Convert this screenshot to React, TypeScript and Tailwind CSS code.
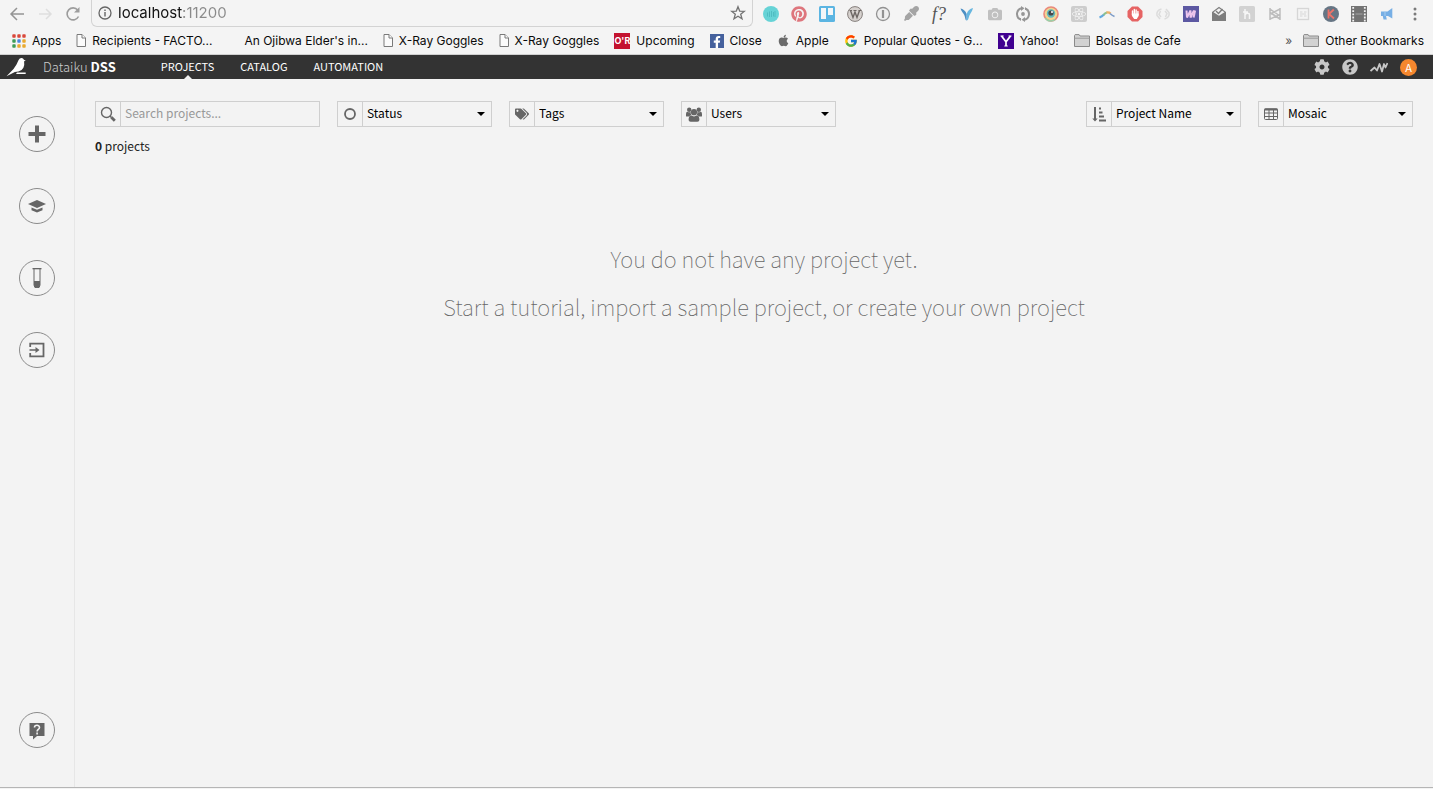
import type { ReactNode } from "react";
import {
  FaApple,
  FaCamera,
  FaCog,
  FaEyeDropper,
  FaFacebookF,
  FaPinterest,
  FaQuestionCircle,
  FaReact,
  FaTags,
} from "react-icons/fa";
import { FcGoogle } from "react-icons/fc";

const sans = "font-['Noto_Sans_CJK_SC','Source_Sans_Pro',sans-serif]";

/* ---------- browser toolbar ---------- */

function PageIcon() {
  return (
    <svg viewBox="0 0 10 13" className="h-[13px] w-[10px]" fill="#fbfbfb" stroke="#7a7a7a">
      <path d="M1 .5h5l3.500 3.500v8.500H1z" />
      <path d="M6 .5V4h3.500" />
    </svg>
  );
}

function FolderIcon() {
  return (
    <svg viewBox="0 0 16 13" className="h-[13px] w-4" fill="#d2d2d2" stroke="#8a8a8a">
      <path d="M.5 12.500v-11l.6-.9h4l1 1.400h9.400v10.500z" />
      <path d="M.5 4.200h15" stroke="#9c9c9c" />
    </svg>
  );
}

function AppsIcon() {
  const colors = ["#d9483b", "#d9483b", "#d9483b", "#3f9d58", "#4b87e0", "#e9a92f", "#3f9d58", "#e9a92f", "#e9a92f"];
  return (
    <svg viewBox="0 0 14 14" className="size-[14px]">
      {colors.map((c, i) => (
        <rect key={i} x={(i % 3) * 5 + 0.3} y={Math.floor(i / 3) * 5 + 0.3} width="3.400" height="3.400" rx=".8" fill={c} />
      ))}
    </svg>
  );
}

function OreillyIcon() {
  return (
    <span className="flex size-4 items-center justify-center bg-[#c4122f] text-[9px] leading-4 font-bold text-white">
      O'R
    </span>
  );
}

function FacebookIcon() {
  return (
    <span className="flex size-[14px] items-end justify-center bg-[#45619d] text-white">
      <FaFacebookF className="size-3" />
    </span>
  );
}

function YahooIcon() {
  return (
    <svg viewBox="0 0 16 16" className="size-4">
      <rect width="16" height="16" fill="#400090" />
      <path d="M3.500 3 8 8.800 12.500 3M8 8.500V13" fill="none" stroke="#fff" strokeWidth="1.700" />
      <path d="M2.500 3h3.200M10.500 3h3M6.300 13h3.400" fill="none" stroke="#fff" />
    </svg>
  );
}

const bookmarks: { label: string; icon: ReactNode }[] = [
  { label: "Apps", icon: <AppsIcon /> },
  { label: "Recipients - FACTO...", icon: <PageIcon /> },
  { label: "An Ojibwa Elder's in...", icon: <span className="w-[11px]" /> },
  { label: "X-Ray Goggles", icon: <PageIcon /> },
  { label: "X-Ray Goggles", icon: <PageIcon /> },
  { label: "Upcoming", icon: <OreillyIcon /> },
  { label: "Close", icon: <FacebookIcon /> },
  { label: "Apple", icon: <FaApple className="size-[13px] text-[#6b6b6b]" /> },
  { label: "Popular Quotes - G...", icon: <FcGoogle className="size-[14px]" /> },
  { label: "Yahoo!", icon: <YahooIcon /> },
  { label: "Bolsas de Cafe", icon: <FolderIcon /> },
];

function Svg({ children }: { children: ReactNode }) {
  return (
    <svg viewBox="0 0 16 16" className="size-4" fill="none">
      {children}
    </svg>
  );
}

const extensions: { name: string; icon: ReactNode }[] = [
  {
    name: "Sound",
    icon: (
      <Svg>
        <circle cx="8" cy="8" r="8" fill="#66d3d6" />
        <path d="M4.500 6.500v4M6.500 5.500v5.500M8.500 5v6M10.500 6v4.500M12 5v6" stroke="#4fbdc2" />
      </Svg>
    ),
  },
  { name: "Pinterest", icon: <FaPinterest className="size-4 text-[#de767d]" /> },
  {
    name: "Trello",
    icon: (
      <Svg>
        <rect width="16" height="16" rx="1.500" fill="#5bb5e2" />
        <rect x="2" y="2" width="5" height="11" fill="#f3f6f8" />
        <rect x="9" y="2" width="5" height="7" fill="#f3f6f8" />
      </Svg>
    ),
  },
  {
    name: "Wikipedia",
    icon: (
      <Svg>
        <circle cx="8" cy="8" r="7.400" fill="#d6d1ce" stroke="#857f7c" />
        <path d="m3.500 4.500 2.500 7 2-5.500 2 5.500 2.500-7" stroke="#6d6764" strokeWidth="1.400" />
        <path d="M2.500 4.500h2.500M6.500 4.500h3M11.500 4.500h2.500" stroke="#6d6764" />
      </Svg>
    ),
  },
  {
    name: "Password",
    icon: (
      <Svg>
        <circle cx="8" cy="8" r="6.500" fill="#efefef" stroke="#929292" strokeWidth="1.300" />
        <path d="M8 4v8" stroke="#929292" strokeWidth="2.200" />
      </Svg>
    ),
  },
  { name: "Eye dropper", icon: <FaEyeDropper className="size-[15px] text-[#a4a4a4]" /> },
  {
    name: "Fonts",
    icon: (
      <span className="font-['Liberation_Serif',serif] text-lg leading-4 text-[#555] italic">
        f?
      </span>
    ),
  },
  {
    name: "Vysor",
    icon: (
      <Svg>
        <path d="M1.500 2.500c2.500.5 5 2 6.200 5.500V14.500C6 14.500 6.500 11 5 8.500 4 6.500 2.500 5.500 1.500 2.500z" fill="#4c8fc4" />
        <path d="M14 2C11 2.500 8.500 4.500 7.700 8v6.500c2.200-.5 1.800-3.500 3-5.500 1-2 2.500-3.500 3.300-7z" fill="#67b6df" />
      </Svg>
    ),
  },
  { name: "Screenshot", icon: <FaCamera className="size-[14px] text-[#c0c0c0]" /> },
  {
    name: "Refresh",
    icon: (
      <Svg>
        <path d="M5 13.200A6 6 0 0 1 6.500 2.200M11 2.800A6 6 0 0 1 9.500 13.800" stroke="#969696" strokeWidth="2" />
        <path d="m6 0 3.500 2.300L6 5zM10 16l-3.500-2.300L10 11zM2 12h4v3zM14 4h-4V1z" fill="#969696" />
        <circle cx="8" cy="8" r="1.900" fill="#969696" />
      </Svg>
    ),
  },
  {
    name: "Eye",
    icon: (
      <Svg>
        <circle cx="8" cy="8" r="7" fill="#f2d491" stroke="#e9887b" strokeWidth="1.600" />
        <path d="M2.200 12A7 7 0 0 0 12 13.700" stroke="#9ad0a8" strokeWidth="1.600" />
        <circle cx="8" cy="7.500" r="4.200" fill="#62b8bd" />
        <circle cx="8" cy="7" r="2.600" fill="#484848" />
        <circle cx="9" cy="6" r="1" fill="#fff" />
      </Svg>
    ),
  },
  {
    name: "React",
    icon: (
      <span className="flex size-4 items-center justify-center rounded-xs bg-[#cdcdcd] text-[#f5f5f5]">
        <FaReact className="size-[14px]" />
      </span>
    ),
  },
  {
    name: "Arc",
    icon: (
      <Svg>
        <path d="M.5 11.500Q3 10.500 5 8.500" stroke="#62a8dd" strokeWidth="2" />
        <path d="M4.500 9Q6 7.200 8 6.500" stroke="#8cc08f" strokeWidth="2" />
        <path d="M7.500 6.500Q10 6 11.500 7.500" stroke="#edb065" strokeWidth="2.400" />
        <path d="M11 7.500Q13 9.500 15.500 10.500" stroke="#7d9cc8" strokeWidth="1.700" />
      </Svg>
    ),
  },
  {
    name: "Ad blocker",
    icon: (
      <Svg>
        <path d="M5 .5h6L15.500 5v6L11 15.500H5L.5 11V5z" fill="#e66363" />
        <path d="M5.500 9V5M7.300 8V3.500M9.100 8V4M10.900 9V5.500" stroke="#fff" strokeWidth="1.400" strokeLinecap="round" />
        <path d="M4.800 7.500h6.800v2.500L9.800 13H7.200L5 10z" fill="#fff" />
      </Svg>
    ),
  },
  {
    name: "Sync",
    icon: (
      <Svg>
        <path d="M6.500 3Q1 4.500 2 9.500l3 3.500M5.500 5 4 8.500 6 11M9.500 13q5.500-1.500 4.500-6.500l-3-3.500M10.500 11 12 7.500 10 5" stroke="#dcdcdc" strokeWidth="1.500" />
      </Svg>
    ),
  },
  {
    name: "Mail merge",
    icon: (
      <Svg>
        <rect width="16" height="16" fill="#5c58a2" />
        <path d="m3.500 4.500.5 7 3.500-7v7l3.500-7" stroke="#ecc5ec" strokeWidth="2" strokeLinejoin="bevel" />
        <path d="m10.500 11.500 1.500-7" stroke="#ecc5ec" strokeWidth="2.200" />
      </Svg>
    ),
  },
  {
    name: "Inbox",
    icon: (
      <Svg>
        <path d="M1 6 8 .8 15 6v9H1z" fill="#7d7d7d" />
        <path d="m2.500 6.300 5.500 3.500 5.500-3.500L8 2.200z" fill="#f1f1f1" />
        <path d="m5 5 2.500 2.500L11.500 3" stroke="#7d7d7d" strokeWidth="1.400" />
      </Svg>
    ),
  },
  {
    name: "Honey",
    icon: (
      <Svg>
        <rect width="16" height="16" rx="1.500" fill="#d2d2d2" />
        <path d="M6 3v10M6 9c1-2 4.500-2.500 4.500 0V13M4 6h5" stroke="#f6f6f6" strokeWidth="1.500" />
      </Svg>
    ),
  },
  {
    name: "Notation",
    icon: (
      <Svg>
        <path d="M3 2v12M13 2v12M3 3l10 7M3 6.500l10 6.500M13 3 3 8M13 8.500 3 13" stroke="#bdbdbd" strokeWidth="1.500" />
      </Svg>
    ),
  },
  {
    name: "Layout",
    icon: (
      <Svg>
        <rect x="2.500" y="2.500" width="11" height="11" stroke="#d6d6d6" strokeWidth="1.300" />
        <path d="M5 6h2.500M9 6h2.500M5 10h2.500M9 10h2.500M5 8h6" stroke="#d6d6d6" strokeWidth="1.200" />
      </Svg>
    ),
  },
  {
    name: "Keyboard",
    icon: (
      <Svg>
        <circle cx="8" cy="8" r="8" fill="#667584" />
        <path d="M5.500 3.500v9M10.800 3.500 6 8l5 4.500" stroke="#ec7268" strokeWidth="1.800" />
      </Svg>
    ),
  },
  {
    name: "Video",
    icon: (
      <Svg>
        <path d="M0 0h16v16H0z" fill="#737373" />
        <path d="M2.200 1v15M13.800 1v15" stroke="#f3f3f3" strokeWidth="1.800" strokeDasharray="1.800 1.400" />
        <path d="M4.500 8h7" stroke="#a5a5a5" />
      </Svg>
    ),
  },
  {
    name: "Announcements",
    icon: (
      <Svg>
        <path d="M13.300 2v10.500L9 10H7l.8 3.500H4.500L3.800 10H2V5.500h6.500z" fill="#77afe5" />
        <path d="M6 5.500V10" stroke="#a9cdef" />
      </Svg>
    ),
  },
  {
    name: "Browser menu",
    icon: (
      <Svg>
        <g fill="#7a7a7a">
          <circle cx="8" cy="3" r="1.500" />
          <circle cx="8" cy="8" r="1.500" />
          <circle cx="8" cy="13" r="1.500" />
        </g>
      </Svg>
    ),
  },
];

function BrowserBar() {
  return (
    <div className="border-b border-[#d0d0d0] bg-[#f4f4f4] font-['Inter',sans-serif]">
      <div className="flex h-[27px] items-stretch pr-[10px] pl-[9px]">
        <div className="flex items-center gap-3 pr-[10px]">
          <button aria-label="Back" className="size-4">
            <svg viewBox="0 0 16 16" fill="none" stroke="#949494" strokeWidth="1.500">
              <path d="M15 8H2M8 2 2 8l6 6" />
            </svg>
          </button>
          <button aria-label="Forward" className="size-4">
            <svg viewBox="0 0 16 16" fill="none" stroke="#dedede" strokeWidth="1.500">
              <path d="M2 8h12M9 3l5 5-5 5" />
            </svg>
          </button>
          <button aria-label="Reload" className="size-4">
            <svg viewBox="0 0 16 16" fill="none" stroke="#9c9c9c" strokeWidth="1.600">
              <path d="M13.500 10.500A6 6 0 1 1 12.700 4" />
              <path d="M14.500 1v5.500H9z" fill="#9c9c9c" stroke="none" />
            </svg>
          </button>
        </div>
        <div className="flex grow items-center rounded-b-md border border-t-0 border-[#d3d3d3] pr-[6px] pl-[6px]">
          <svg viewBox="0 0 14 14" className="mr-[6px] size-[14px] shrink-0" fill="none" stroke="#666">
            <circle cx="7" cy="7" r="6" strokeWidth="1.300" />
            <path d="M7 6v4.500M7 3.500V5" strokeWidth="1.400" />
          </svg>
          <input
            aria-label="Address"
            defaultValue="localhost:11200"
            className="min-w-0 grow bg-linear-to-r from-[#111] from-[65px] to-[#8a8a8a] to-[65px] bg-clip-text text-[15px] text-transparent outline-none"
          />
          <button aria-label="Bookmark this page" className="size-4">
            <svg viewBox="0 0 16 16" fill="none" stroke="#737373" strokeWidth="1.300">
              <path d="m8 1.700 1.700 4.400 4.700.2-3.700 2.900 1.300 4.600L8 11.200l-4 2.600 1.300-4.600L1.600 6.300l4.700-.2z" />
            </svg>
          </button>
        </div>
        <div className="flex items-center gap-3 pl-[10px]">
          {extensions.map((e) => (
            <button key={e.name} aria-label={e.name} className="flex size-4 items-center justify-center">
              {e.icon}
            </button>
          ))}
        </div>
      </div>
      <nav aria-label="Bookmarks" className="flex h-[27px] items-center gap-[15px] pr-[9px] pl-3 text-xs whitespace-nowrap text-[#0a0a0a]">
        {bookmarks.map((b, i) => (
          <a key={i} href="#" className="flex items-center gap-[6px]">
            {b.icon}
            {b.label}
          </a>
        ))}
        <button aria-label="More bookmarks" className="-mr-1 ml-auto text-[#555]">
          »
        </button>
        <a href="#" className="flex items-center gap-[6px]">
          <FolderIcon />
          Other Bookmarks
        </a>
      </nav>
    </div>
  );
}

/* ---------- application header ---------- */

function AppHeader() {
  return (
    <header className="flex h-6 items-center bg-[#333] pr-4 pl-[6px] text-[#eee]">
      <svg viewBox="0 0 21 20" className="h-5 w-[21px]" fill="#fff">
        <path d="M.5 19.300 7.500 12l3-4.500L12.600 3q1-2 3-1.900 1.700 0 2.300 1.600l1.900 1-1.700.6q.6 3.700-.7 6.400-1.300 2.800-5 3.800l-3.500.4z" />
        <path d="M11 15.500h8.700V17H10z" />
      </svg>
      <a href="#" className="ml-4 text-[13px] leading-6 font-light text-[#ccc]">
        Dataiku <strong className="font-bold text-white">DSS</strong>
      </a>
      <nav className="ml-[45px] flex h-6 gap-[26px] text-[11px] leading-[22px] text-white">
        <a href="#" aria-current="page" className="relative">
          PROJECTS
          <svg viewBox="0 0 8 4" className="absolute bottom-0 left-1/2 h-1 w-2 -translate-x-1/2" fill="#f3f3f3">
            <path d="M0 4 4 0l4 4z" />
          </svg>
        </a>
        <a href="#">CATALOG</a>
        <a href="#">AUTOMATION</a>
      </nav>
      <div className="ml-auto flex items-center gap-3 text-[#c8c8c8]">
        <button aria-label="Settings">
          <FaCog className="size-4" />
        </button>
        <button aria-label="Help">
          <FaQuestionCircle className="size-4" />
        </button>
        <button aria-label="Activity">
          <svg viewBox="0 0 18 16" className="h-4 w-[18px]" fill="none" stroke="currentColor" strokeWidth="1.800" strokeLinejoin="round">
            <path d="M.5 12 4.500 8.500l2.500 3L9.500 5l2.500 7.500L14 5l1.500 3.500L17.500 4" />
          </svg>
        </button>
        <button aria-label="Account" className="flex size-[17px] items-center justify-center rounded-full bg-[#f5872e] text-[11px] leading-4 text-white">
          A
        </button>
      </div>
    </header>
  );
}

/* ---------- sidebar ---------- */

function RoundButton({ label, children }: { label: string; children: ReactNode }) {
  return (
    <button aria-label={label} className="flex size-9 items-center justify-center rounded-full border border-[#8b8b8b] text-[#666]">
      <svg viewBox="0 0 20 20" className="size-5" fill="currentColor">
        {children}
      </svg>
    </button>
  );
}

function Sidebar() {
  return (
    <aside className="flex w-[75px] shrink-0 flex-col items-center gap-9 border-r border-[#e6e6e6] pt-[37px] pb-[39px]">
      <RoundButton label="New project">
        <path d="M8 1.500h4V8h6.500v4H12v6.500H8V12H1.500V8H8z" />
      </RoundButton>
      <RoundButton label="Tutorials">
        <path d="m10 4 9 4-9 4-9-4z" />
        <path d="m4.500 11.500 5.500 2.300 5.500-2.300v2.700l-5.500 2.300-5.500-2.300z" />
      </RoundButton>
      <RoundButton label="Samples">
        <path d="M5.500 0h9v1.300h-9z" />
        <path d="M7 1v16a3 3 0 0 0 6 0V1" fill="none" stroke="currentColor" />
        <path d="M7 13h6v4a3 3 0 0 1-6 0z" />
      </RoundButton>
      <RoundButton label="Import project">
        <path d="M3.200 7V3.700h13.300v12.600H3.200V13" fill="none" stroke="currentColor" strokeWidth="1.800" />
        <path d="M2.500 9.200h6V7l4 3-4 3v-2.200h-6z" />
      </RoundButton>
      <div className="mt-auto">
        <RoundButton label="Get help">
          <path d="M2.500 3h15v13H10l-4 3.500V16H2.500z" />
          <path d="M7.500 7.500C7.500 4.500 12.500 4.500 12.500 7.400c0 2-2.400 1.900-2.400 4M10.100 12.600v1.800" fill="none" stroke="#f3f3f3" strokeWidth="1.600" />
        </RoundButton>
      </div>
    </aside>
  );
}

/* ---------- project list ---------- */

function Field({ id, icon, children, wide }: { id: string; icon: ReactNode; children: ReactNode; wide?: boolean }) {
  return (
    <div className={`relative flex h-[26px] shrink-0 border border-[#cfcfcf] ${wide ? "w-[225px]" : "w-[155px]"}`}>
      <label htmlFor={id} className="flex w-[25px] shrink-0 items-center justify-center border-r border-[#cfcfcf] text-[#666]">
        {icon}
      </label>
      {children}
    </div>
  );
}

function SelectField({ id, label, icon }: { id: string; label: string; icon: ReactNode }) {
  return (
    <Field id={id} icon={icon}>
      <select id={id} aria-label={label} className="min-w-0 grow appearance-none bg-transparent pb-[2px] pl-1 text-xs text-black outline-none">
        <option>{label}</option>
      </select>
      <svg viewBox="0 0 8 4" className="pointer-events-none absolute top-[10px] right-[6px] h-1 w-2">
        <path d="M0 0h8L4 4z" />
      </svg>
    </Field>
  );
}

function Toolbar() {
  return (
    <div className="flex gap-[17px]">
      <Field
        id="search"
        wide
        icon={
          <svg viewBox="0 0 16 16" className="size-4" fill="none" stroke="currentColor">
            <circle cx="6.500" cy="6.500" r="5" strokeWidth="1.400" />
            <path d="M10 10l1.500 1.500" strokeWidth="1.500" />
            <path d="m11.300 11.300 3.500 3.500" strokeWidth="2.800" />
          </svg>
        }
      >
        <input id="search" placeholder="Search projects..." className="min-w-0 grow bg-transparent pb-[2px] pl-1 text-xs outline-none placeholder:text-[#999]" />
      </Field>
      <SelectField
        id="status"
        label="Status"
        icon={
          <svg viewBox="0 0 12 12" className="size-3" fill="none" stroke="currentColor" strokeWidth="1.800">
            <circle cx="6" cy="6" r="5" />
          </svg>
        }
      />
      <SelectField id="tags" label="Tags" icon={<FaTags className="size-[14px]" />} />
      <SelectField
        id="users"
        label="Users"
        icon={
          <svg viewBox="0 0 16 15" className="h-[15px] w-4" fill="currentColor">
            <circle cx="3.200" cy="2.700" r="2.200" />
            <circle cx="12.800" cy="2.700" r="2.200" />
            <circle cx="8" cy="5.200" r="3.100" />
            <path d="M0 9V7q0-2.300 1.500-2.300Q3 5.800 4.600 5q-.2 2 1 3.300Q4 8.400 3 9.500H.8Q0 9.500 0 9zM16 9V7q0-2.300-1.500-2.300Q13 5.800 11.400 5q.2 2-1 3.300 1.600.1 2.600 1.200h2.200Q16 9.500 16 9z" />
            <path d="M2.600 13q0-4.400 2.600-4.400Q8 10.200 10.800 8.600q2.600 0 2.600 4.400 0 1.700-2 1.700H4.600q-2 0-2-1.700z" />
          </svg>
        }
      />
      <div className="ml-auto flex gap-[17px]">
        <SelectField
          id="sort"
          label="Project Name"
          icon={
            <svg viewBox="0 0 14 15" className="h-[15px] w-[14px]" fill="currentColor">
              <path d="M2 0h2v11.500h1.700L3 14.500.3 11.500H2zM7 .5h2v2H7zM7 4.500h3.500v2H7zM7 8.500h5v2H7zM7 12.500h7v2H7z" />
            </svg>
          }
        />
        <SelectField
          id="view"
          label="Mosaic"
          icon={
            <svg viewBox="0 0 14 12" className="h-3 w-[14px]" fill="none" stroke="currentColor">
              <rect x=".5" y=".8" width="13" height="10.700" rx="1" />
              <path d="M.5 1.500h13" strokeWidth="2" />
              <path d="M.5 5h13M.5 8.500h13M5 1v10.500M9.500 1v10.500" />
            </svg>
          }
        />
      </div>
    </div>
  );
}

export default function App() {
  return (
    <div className="flex min-h-screen flex-col bg-[#f3f3f3]">
      <BrowserBar />
      <div className={`flex grow flex-col ${sans}`}>
        <AppHeader />
        <div className="flex grow border-b border-[#b5b5b5]">
          <Sidebar />
          <main className="grow pt-[22px] pr-5 pl-5 text-[#222]">
            <Toolbar />
            <p className="mt-[9px] text-xs leading-5">
              <strong className="font-bold">0</strong> projects
            </p>
            <div className="mt-[78px] pl-5 text-center text-[22px] leading-[48px] font-thin text-[#666]">
              <p>You do not have any project yet.</p>
              <p>Start a tutorial, import a sample project, or create your own project</p>
            </div>
          </main>
        </div>
        <div className="h-px" />
      </div>
    </div>
  );
}
